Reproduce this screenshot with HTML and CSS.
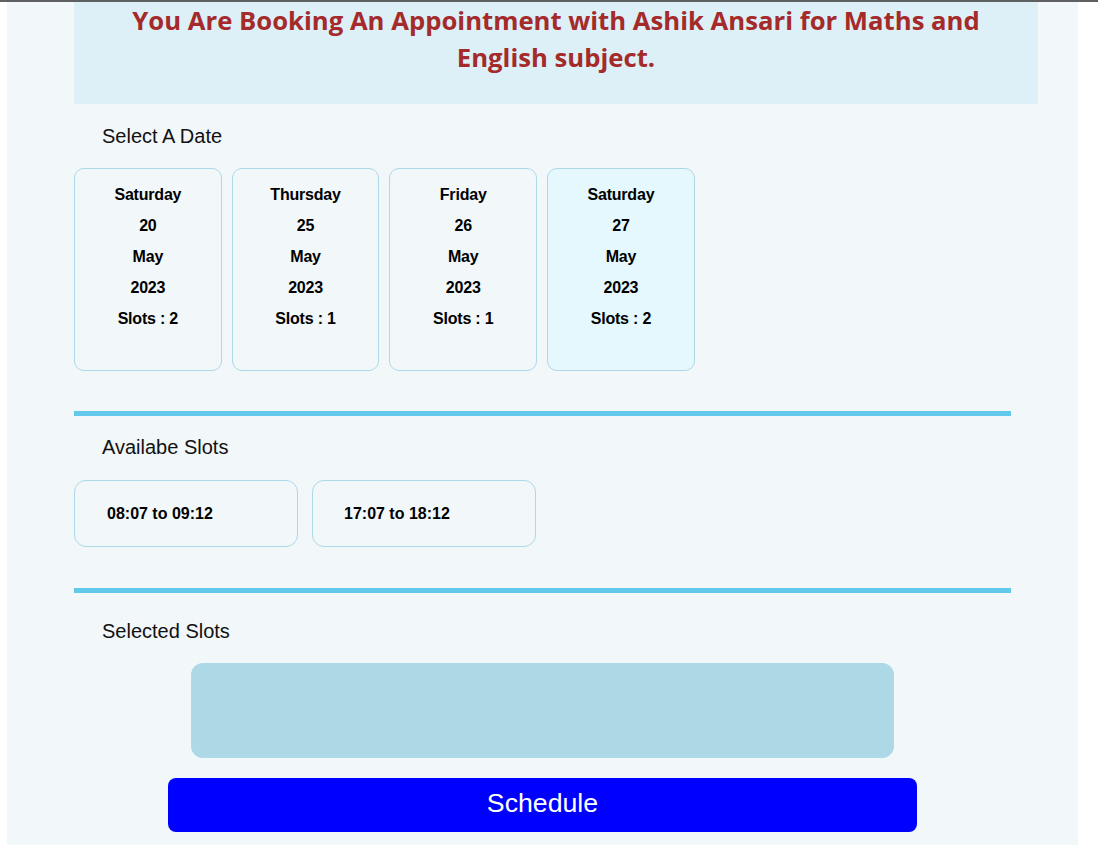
FILE: index.html
```html
<!DOCTYPE html>
<html lang="en">
<head>
<meta charset="utf-8">
<title>Book Appointment</title>
<link rel="stylesheet" href="styles.css">
</head>
<body>
<div class="topbar"></div>
<main class="page">
  <div class="content">
    <header class="banner">
      <h2 class="banner-title">You Are Booking An Appointment with Ashik Ansari for Maths and English subject.</h2>
    </header>

    <h3 class="label label-date">Select A Date</h3>
    <div class="dates">
      <div class="date-card">
        <p>Saturday</p><p>20</p><p>May</p><p>2023</p><p>Slots : 2</p>
      </div>
      <div class="date-card">
        <p>Thursday</p><p>25</p><p>May</p><p>2023</p><p>Slots : 1</p>
      </div>
      <div class="date-card">
        <p>Friday</p><p>26</p><p>May</p><p>2023</p><p>Slots : 1</p>
      </div>
      <div class="date-card date-card-active">
        <p>Saturday</p><p>27</p><p>May</p><p>2023</p><p>Slots : 2</p>
      </div>
    </div>

    <div class="divider divider-1"></div>

    <h3 class="label label-avail">Availabe Slots</h3>
    <div class="slots">
      <div class="slot-card">08:07 to 09:12</div>
      <div class="slot-card slot-card-2">17:07 to 18:12</div>
    </div>

    <div class="divider divider-2"></div>

    <h3 class="label label-selected">Selected Slots</h3>
  </div>

  <div class="selected-box"></div>
  <button class="schedule-btn" type="button">Schedule</button>
</main>
</body>
</html>
```

FILE: styles.css
```css
html, body {
  margin: 0;
  padding: 0;
  background: #ffffff;
}

body {
  font-family: "Liberation Sans", Arial, sans-serif;
  color: #000;
}

.topbar {
  height: 2px;
  background: #5f6061;
}

.page {
  margin-left: 7px;
  width: 1071px;
  height: 843px;
  box-sizing: border-box;
  background: #f2f7fa;
  display: flex;
  flex-direction: column;
  align-items: center;
}

.content {
  align-self: stretch;
  padding-left: 67px;
}

.banner {
  width: 964px;
  height: 102px;
  background: #ddf0f8;
  box-sizing: border-box;
  padding-top: 0;
}

.banner-title {
  margin: 0;
  text-align: center;
  color: #a52a2a;
  font-family: "Open Sans", "Noto Sans", sans-serif;
  font-weight: 700;
  font-size: 25.7px;
  line-height: 37px;
  letter-spacing: 0;
  padding: 0 40px;
}

.label {
  margin: 0;
  font-weight: 400;
  font-size: 20px;
  line-height: 22px;
  color: #111;
  padding-left: 28px;
}

.label-date { margin-top: 21px; }
.label-avail { margin-top: 20px; }
.label-selected { margin-top: 27px; }

.dates {
  display: flex;
  gap: 10px;
  margin-top: 21px;
}

.date-card {
  width: 147.7px;
  height: 203px;
  box-sizing: border-box;
  border: 1px solid #add8e6;
  border-radius: 10px;
  padding-top: 10px;
  text-align: center;
}

.date-card-active {
  background: #e4f8fe;
}

.date-card p {
  margin: 0;
  font-weight: 700;
  font-size: 16px;
  line-height: 31px;
  letter-spacing: -0.2px;
}

.divider {
  width: 937px;
  height: 5px;
  background: #62c9ea;
}

.divider-1 { margin-top: 40px; }
.divider-2 { margin-top: 41px; }

.slots {
  display: flex;
  gap: 14px;
  margin-top: 22px;
}

.slot-card {
  width: 224px;
  height: 67px;
  box-sizing: border-box;
  border: 1px solid #add8e6;
  border-radius: 12px;
  padding-left: 32px;
  display: flex;
  align-items: center;
  font-weight: 700;
  font-size: 16px;
}

.slot-card-2 {
  padding-left: 31px;
}

.selected-box {
  width: 703px;
  height: 95px;
  margin-top: 21px;
  background: #add8e6;
  border-radius: 12px;
}

.schedule-btn {
  width: 749px;
  height: 54px;
  margin-top: 20px;
  border: none;
  border-radius: 8px;
  background: #0000ff;
  color: #ffffff;
  font-family: "Liberation Sans", Arial, sans-serif;
  font-size: 26.7px;
  padding: 0 0 4px;
  cursor: pointer;
}
```
